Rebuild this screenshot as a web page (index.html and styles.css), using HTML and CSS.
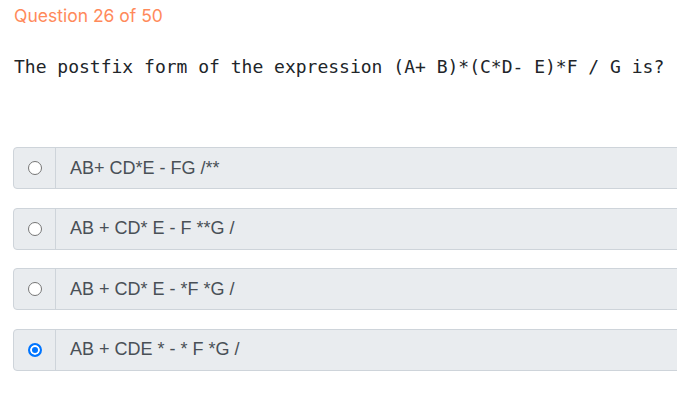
FILE: index.html
```html
<!DOCTYPE html>
<html>
<head>
<meta charset="utf-8">
<link rel="stylesheet" href="styles.css">
</head>
<body>
<div class="quiz">
  <div class="counter">Question 26 of 50</div>
  <div class="question">The postfix form of the expression (A+ B)*(C*D- E)*F / G is?</div>
  <div class="options">
    <label class="option">
      <span class="radio-cell"><span class="radio"></span></span>
      <span class="text">AB+ CD*E - FG /**</span>
    </label>
    <label class="option">
      <span class="radio-cell"><span class="radio"></span></span>
      <span class="text">AB + CD* E - F **G /</span>
    </label>
    <label class="option">
      <span class="radio-cell"><span class="radio"></span></span>
      <span class="text">AB + CD* E - *F *G /</span>
    </label>
    <label class="option">
      <span class="radio-cell"><span class="radio checked"></span></span>
      <span class="text">AB + CDE * - * F *G /</span>
    </label>
  </div>
</div>
</body>
</html>
```
FILE: styles.css
```css
html, body {
  margin: 0;
  padding: 0;
  overflow: hidden;
  background: #fff;
}
.quiz {
  padding: 5px 0 0 14px;
  width: 700px;
}
.counter {
  font-family: Inter, "Open Sans", sans-serif;
  font-size: 17.5px;
  line-height: 22px;
  color: #ff8a5b;
}
.question {
  margin-top: 28px;
  font-family: "DejaVu Sans Mono", monospace;
  font-size: 18px;
  line-height: 24px;
  color: #212529;
  white-space: nowrap;
}
.options {
  margin-top: 68px;
  margin-left: -1px;
  display: flex;
  flex-direction: column;
  gap: 18.6px;
}
.option {
  display: flex;
  height: 42px;
  box-sizing: border-box;
  border: 1px solid #ced4da;
  border-radius: 4px;
  background: #e9ecef;
}
.radio-cell {
  width: 41px;
  border-right: 1px solid #ced4da;
  display: flex;
  align-items: center;
  justify-content: center;
}
.radio {
  width: 14px;
  height: 14px;
  box-sizing: border-box;
  border-radius: 50%;
  border: 1px solid #767676;
  background: #fff;
}
.radio.checked {
  border: 2px solid #0075ff;
  background: #0075ff;
  box-shadow: inset 0 0 0 2px #fff;
}
.text {
  display: flex;
  align-items: center;
  padding-left: 14px;
  font-family: "Liberation Sans", Arial, sans-serif;
  font-size: 18px;
  color: #495057;
}
```
